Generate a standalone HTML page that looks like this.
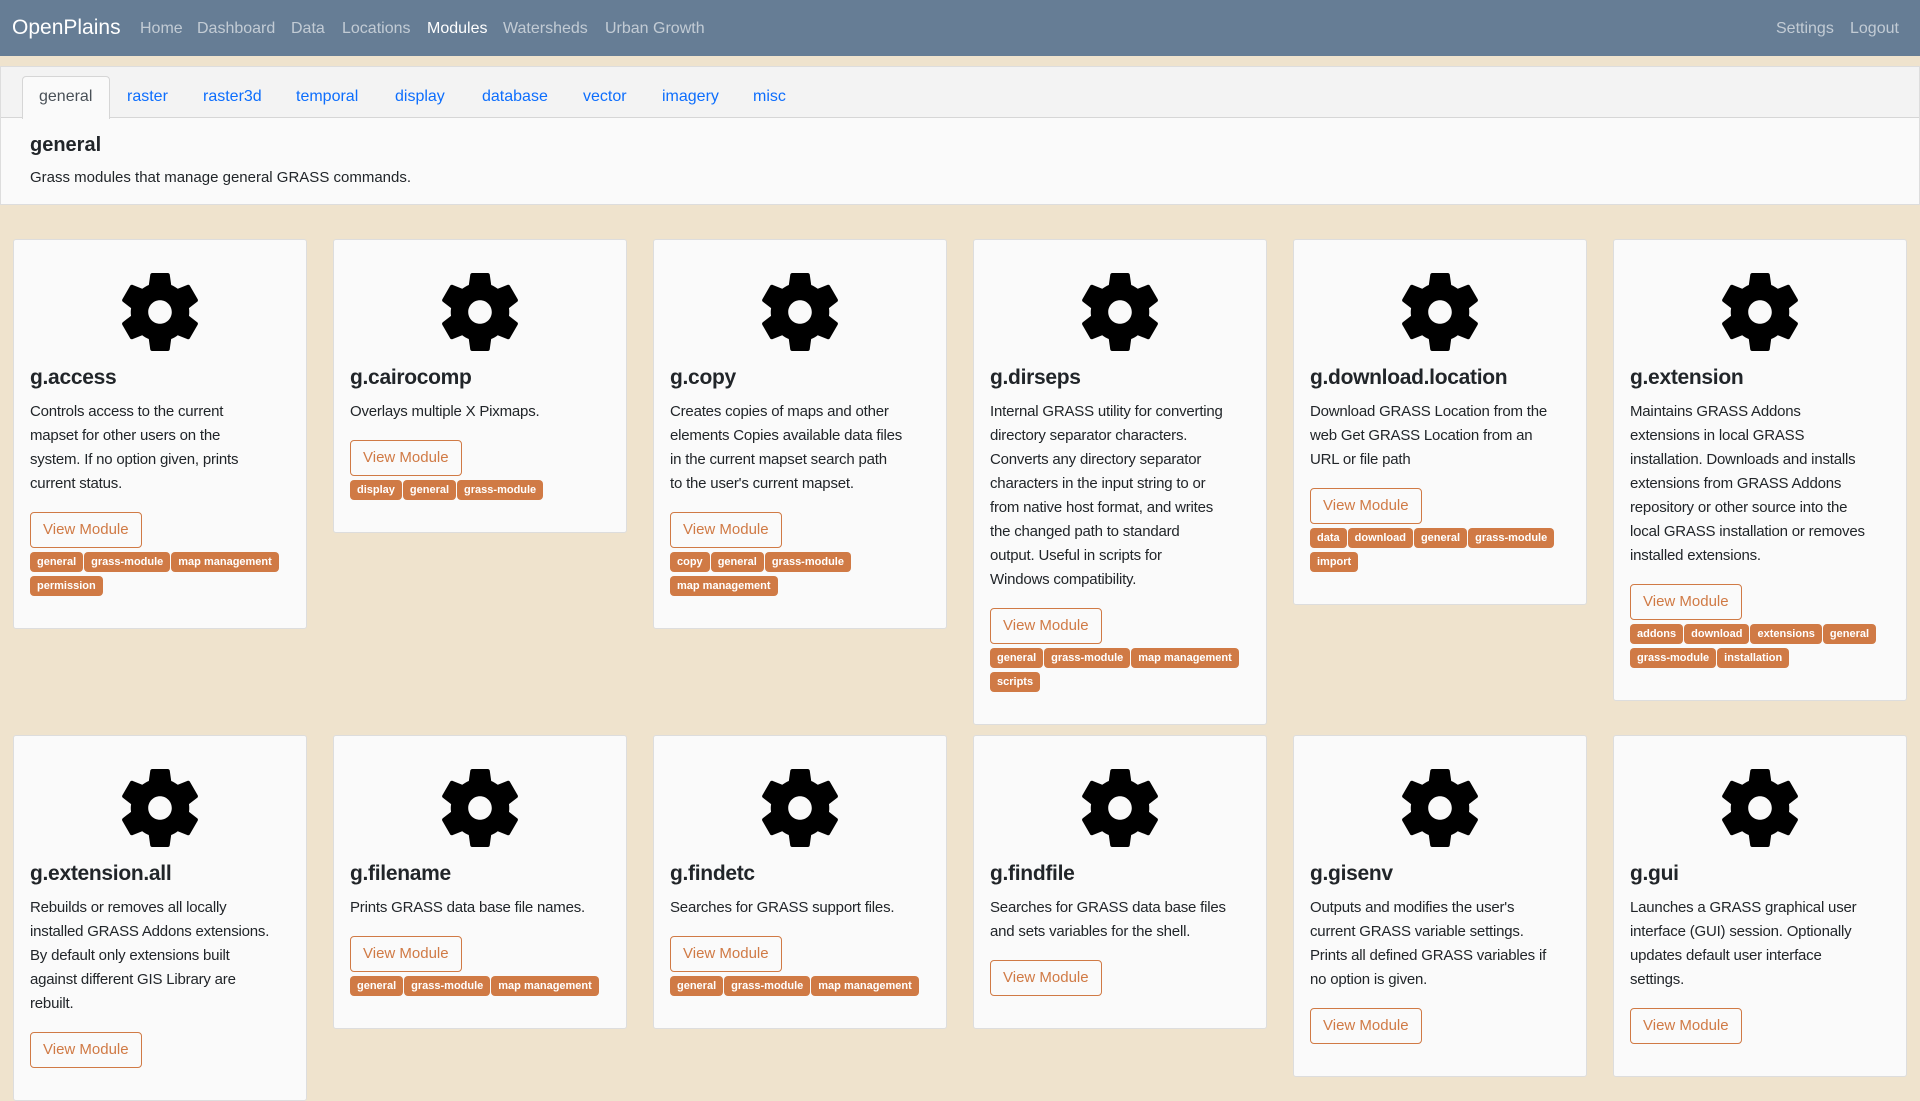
<!DOCTYPE html>
<html><head><meta charset="utf-8"><style>
*{box-sizing:border-box;margin:0;padding:0}
body{width:1920px;height:995px;overflow:hidden;background:#efe3cd;font-family:"Liberation Sans",sans-serif;color:#212529}
.nav{height:56px;background:#667d95;position:relative;color:rgba(255,255,255,.6);font-size:16px}
.nav span{position:absolute;top:20px;white-space:nowrap}
.nav .brand{left:12px;top:16px;font-size:21px;color:#fff}
.nav .act{color:#fff}
.panel{position:absolute;left:0;top:66px;width:1920px;height:139px;background:#fafafa;border:1px solid #ddd}
.tabbar{position:absolute;left:0;top:0;width:1918px;height:51px;background:#f3f3f3;border-bottom:1px solid #d6d6d6}
.tab{position:absolute;top:21px;font-size:16px;color:#0d6efd}
.tabact{position:absolute;left:21px;top:9px;width:88px;height:43px;background:#fafafa;border:1px solid #d6d6d6;border-bottom:none;border-radius:4px 4px 0 0}
.panel h2{position:absolute;left:29px;top:67px;font-size:20px;font-weight:bold}
.panel p{position:absolute;left:29px;top:102px;font-size:15px}
.grid{position:absolute;left:13px;top:239px;width:1920px;display:flex;flex-wrap:wrap;column-gap:26px;row-gap:10px;align-items:flex-start}
.card{width:294px;background:#fafafa;border:1px solid #ddd;border-radius:3px;padding:33px 16px 32px}
.card svg{display:block;margin:0 auto;width:78px;height:78px}
.card h3{font-size:21px;font-weight:bold;margin-top:15px;line-height:24px;letter-spacing:-.3px}
.card p{font-size:15px;line-height:24px;margin-top:10px;white-space:nowrap;letter-spacing:-.2px}
.btn{display:inline-block;margin-top:16px;height:36px;padding:0 12px;line-height:34px;border:1px solid #d07a45;border-radius:4px;color:#d07a45;font-size:15px}
.tags{margin-top:4px;display:flex;flex-wrap:wrap;gap:4px 1px}
.tags b{background:#d07a45;color:#fff;font-size:11px;padding:0 7px;height:20px;line-height:20px;border-radius:4px}
</style></head><body>
<div class="nav">
<span class="brand">OpenPlains</span>
<span style="left:140px">Home</span><span style="left:197px">Dashboard</span><span style="left:291px">Data</span><span style="left:342px">Locations</span><span class="act" style="left:427px">Modules</span><span style="left:503px">Watersheds</span><span style="left:605px">Urban Growth</span>
<span style="left:1776px">Settings</span><span style="left:1850px">Logout</span>
</div>
<div class="panel">
<div class="tabbar"><div class="tabact"></div>
<span class="tab" style="left:38px;color:#495057">general</span><span class="tab" style="left:126px">raster</span><span class="tab" style="left:202px">raster3d</span><span class="tab" style="left:295px">temporal</span><span class="tab" style="left:394px">display</span><span class="tab" style="left:481px">database</span><span class="tab" style="left:582px">vector</span><span class="tab" style="left:661px">imagery</span><span class="tab" style="left:752px">misc</span>
</div>
<h2>general</h2>
<p>Grass modules that manage general GRASS commands.</p>
</div>
<svg width="0" height="0" style="position:absolute"><defs><symbol id="g" viewBox="2.6 2.4 18.8 19.2"><path fill="#000" fill-rule="evenodd" d="M19.14,12.94c0.04-0.3,0.06-0.61,0.06-0.94c0-0.32-0.02-0.64-0.07-0.94l2.03-1.58c0.18-0.14,0.23-0.41,0.12-0.61l-1.92-3.32c-0.12-0.22-0.37-0.29-0.59-0.22l-2.39,0.96c-0.5-0.38-1.03-0.7-1.62-0.94L14.4,2.81c-0.04-0.24-0.24-0.41-0.48-0.41h-3.84c-0.24,0-0.43,0.17-0.47,0.41L9.25,5.35C8.66,5.59,8.12,5.92,7.63,6.29L5.24,5.33c-0.22-0.08-0.47,0-0.59,0.22L2.74,8.87C2.62,9.08,2.66,9.34,2.86,9.48l2.03,1.58C4.84,11.36,4.8,11.69,4.8,12s0.02,0.64,0.07,0.94l-2.03,1.58c-0.18,0.14-0.23,0.41-0.12,0.61l1.92,3.32c0.12,0.22,0.37,0.29,0.59,0.22l2.39-0.96c0.5,0.38,1.03,0.7,1.62,0.94l0.36,2.54c0.05,0.24,0.24,0.41,0.48,0.41h3.84c0.24,0,0.44-0.17,0.47-0.41l0.36-2.54c0.59-0.24,1.13-0.56,1.62-0.94l2.39,0.96c0.22,0.08,0.47,0,0.59-0.22l1.92-3.32c0.12-0.22,0.07-0.47-0.12-0.61L19.14,12.94z M12,14.9c-1.6,0-2.9-1.3-2.9-2.9s1.3-2.9,2.9-2.9s2.9,1.3,2.9,2.9S13.6,14.9,12,14.9z"/></symbol></defs></svg>
<div class="grid">
<div class="card"><svg><use href="#g"/></svg><h3>g.access</h3><p>Controls access to the current<br>mapset for other users on the<br>system. If no option given, prints<br>current status.</p><span class="btn">View Module</span><div class="tags"><b>general</b><b>grass-module</b><b>map management</b><b>permission</b></div></div>
<div class="card"><svg><use href="#g"/></svg><h3>g.cairocomp</h3><p>Overlays multiple X Pixmaps.</p><span class="btn">View Module</span><div class="tags"><b>display</b><b>general</b><b>grass-module</b></div></div>
<div class="card"><svg><use href="#g"/></svg><h3>g.copy</h3><p>Creates copies of maps and other<br>elements Copies available data files<br>in the current mapset search path<br>to the user's current mapset.</p><span class="btn">View Module</span><div class="tags"><b>copy</b><b>general</b><b>grass-module</b><b>map management</b></div></div>
<div class="card"><svg><use href="#g"/></svg><h3>g.dirseps</h3><p>Internal GRASS utility for converting<br>directory separator characters.<br>Converts any directory separator<br>characters in the input string to or<br>from native host format, and writes<br>the changed path to standard<br>output. Useful in scripts for<br>Windows compatibility.</p><span class="btn">View Module</span><div class="tags"><b>general</b><b>grass-module</b><b>map management</b><b>scripts</b></div></div>
<div class="card"><svg><use href="#g"/></svg><h3>g.download.location</h3><p>Download GRASS Location from the<br>web Get GRASS Location from an<br>URL or file path</p><span class="btn">View Module</span><div class="tags"><b>data</b><b>download</b><b>general</b><b>grass-module</b><b>import</b></div></div>
<div class="card"><svg><use href="#g"/></svg><h3>g.extension</h3><p>Maintains GRASS Addons<br>extensions in local GRASS<br>installation. Downloads and installs<br>extensions from GRASS Addons<br>repository or other source into the<br>local GRASS installation or removes<br>installed extensions.</p><span class="btn">View Module</span><div class="tags"><b>addons</b><b>download</b><b>extensions</b><b>general</b><b>grass-module</b><b>installation</b></div></div>
<div class="card"><svg><use href="#g"/></svg><h3>g.extension.all</h3><p>Rebuilds or removes all locally<br>installed GRASS Addons extensions.<br>By default only extensions built<br>against different GIS Library are<br>rebuilt.</p><span class="btn">View Module</span></div>
<div class="card"><svg><use href="#g"/></svg><h3>g.filename</h3><p>Prints GRASS data base file names.</p><span class="btn">View Module</span><div class="tags"><b>general</b><b>grass-module</b><b>map management</b></div></div>
<div class="card"><svg><use href="#g"/></svg><h3>g.findetc</h3><p>Searches for GRASS support files.</p><span class="btn">View Module</span><div class="tags"><b>general</b><b>grass-module</b><b>map management</b></div></div>
<div class="card"><svg><use href="#g"/></svg><h3>g.findfile</h3><p>Searches for GRASS data base files<br>and sets variables for the shell.</p><span class="btn">View Module</span></div>
<div class="card"><svg><use href="#g"/></svg><h3>g.gisenv</h3><p>Outputs and modifies the user's<br>current GRASS variable settings.<br>Prints all defined GRASS variables if<br>no option is given.</p><span class="btn">View Module</span></div>
<div class="card"><svg><use href="#g"/></svg><h3>g.gui</h3><p>Launches a GRASS graphical user<br>interface (GUI) session. Optionally<br>updates default user interface<br>settings.</p><span class="btn">View Module</span></div>
</div>
</body></html>
